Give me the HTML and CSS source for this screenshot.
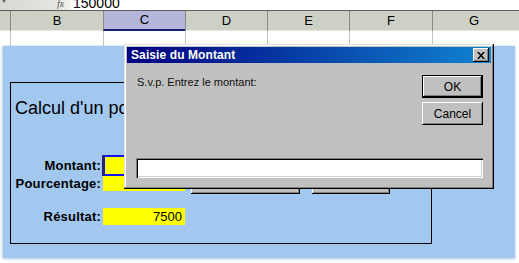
FILE: index.html
```html
<!DOCTYPE html>
<html lang="fr">
<head>
    <meta charset="UTF-8" />
    <meta name="viewport" content="width=device-width, initial-scale=1.0" />
    <link rel="stylesheet" href="styles.css">
</head>
<body>
    <div class="sheet">
        <div class="formula-bar">
            <div class="name-box"><span class="drop">&#9662;</span></div>
            <div class="fx">fx</div>
            <div class="formula">150000</div>
        </div>
        <div class="grid heads">
            <div class="corner"></div>
            <div class="head">B</div>
            <div class="head active">C</div>
            <div class="head">D</div>
            <div class="head">E</div>
            <div class="head">F</div>
            <div class="head">G</div>
        </div>
        <div class="grid cells">
            <div class="corner"></div>
            <div class="cell"></div>
            <div class="cell"></div>
            <div class="cell"></div>
            <div class="cell"></div>
            <div class="cell"></div>
            <div class="cell"></div>
        </div>
    </div>

    <!-- formulaire pose sur la feuille -->
    <div class="panel">
        <div class="frame">
            <h1 class="title">Calcul d'un pourcentage</h1>
            <div class="calc">
                <div class="fields">
                    <div class="lbl">Montant:</div>
                    <div class="box selected"></div>
                    <div class="lbl">Pourcentage:</div>
                    <div class="box"></div>
                    <div class="lbl result">Résultat:</div>
                    <div class="box result">7500</div>
                </div>
                <div class="actions">
                    <button class="sheet-btn wide">Calculer</button>
                    <button class="sheet-btn">Effacer</button>
                </div>
            </div>
        </div>
    </div>

    <!-- boite InputBox -->
    <div class="dialog">
        <div class="titlebar">
            <span class="caption">Saisie du Montant</span>
            <button class="close">
                <svg width="8" height="7" viewBox="0 0 8 7">
                    <path d="M0 0h2l2 2.5L6 0h2L5 3.5 8 7H6L4 4.5 2 7H0l3-3.5z" fill="#000" />
                </svg>
            </button>
        </div>
        <div class="dlg-body">
            <div class="dlg-top">
                <p class="prompt">S.v.p. Entrez le montant:</p>
                <div class="dlg-buttons">
                    <button class="win-btn default">OK</button>
                    <button class="win-btn">Cancel</button>
                </div>
            </div>
            <input class="dlg-input" type="text" />
        </div>
    </div>
</body>
</html>
```

FILE: styles.css
```css
body {
    margin: 0;
    font-family: "Liberation Sans", Arial, sans-serif;
    background: #fff;
    width: 519px;
    height: 263px;
    overflow: hidden;
}

/* feuille excel */
.formula-bar {
    display: flex;
    height: 10px;
    border-bottom: 1px solid #5e5e5e;
    overflow: hidden;
}

.name-box {
    width: 57px;
    background: linear-gradient(to right, #d8d8d4, #e4e4e0);
    position: relative;
}

.drop {
    position: absolute;
    left: 2px;
    top: -3px;
    font-size: 8px;
    line-height: 8px;
    color: #555;
}

.fx {
    width: 14px;
    background: linear-gradient(to right, #e4e4e0, #f4f4f2);
    font-family: "Liberation Serif", serif;
    font-style: italic;
    font-size: 10px;
    line-height: 8px;
    color: #555;
}

.formula {
    flex: 1;
    padding-left: 2px;
    font-size: 14px;
    line-height: 10px;
    margin-top: -2px;
    color: #000;
}

.grid {
    display: grid;
    grid-template-columns: 10px 93px 82px 82px 82px 83px 83px;
}

.heads {
    height: 19px;
    background: #cdd0c5;
    border-bottom: 1px solid #e8e8e0;
}

.head {
    border-left: 1px solid #8a8c84;
    text-align: center;
    font-size: 13px;
    line-height: 19px;
    color: #000;
}

.head.active {
    background: #b3b5da;
    border-bottom: 2px solid #14206e;
    line-height: 18px;
}

.cells {
    height: 16px;
}

.cell {
    border-left: 1px solid #c4c4c4;
}

/* zone bleue */
.panel {
    position: absolute;
    left: 3px;
    top: 46px;
    width: 512px;
    height: 212px;
    box-sizing: border-box;
    padding: 36px 0 0 7px;
    background: #a3c8ef;
    box-shadow: 0 1px 3px rgba(140, 170, 210, 0.6), -1px 0 2px rgba(200, 220, 245, 0.8);
}

.frame {
    width: 422px;
    height: 162px;
    box-sizing: border-box;
    border: 1px solid #000;
}

.title {
    margin: 0;
    padding: 15px 0 0 4px;
    font-size: 18px;
    font-weight: normal;
    line-height: 21px;
    white-space: nowrap;
}

.calc {
    display: flex;
    margin-top: 36px;
}

.fields {
    display: grid;
    grid-template-columns: 90px 82px;
    grid-template-rows: 21px 15px 17px 17px;
    column-gap: 2px;
}

.lbl {
    font-size: 13px;
    font-weight: bold;
    text-align: right;
    align-self: center;
    white-space: nowrap;
    letter-spacing: 0.2px;
}

.lbl.result,
.box.result {
    grid-row: 4;
}

.box {
    background: #ffff00;
    font-size: 13px;
    text-align: right;
    padding-right: 3px;
    line-height: 17px;
    box-sizing: border-box;
}

.box.selected {
    border: 2px solid #1414f0;
    box-shadow: -1px 0 0 #4a2a10;
}

.actions {
    display: flex;
    gap: 12px;
    margin: 13px 0 0 6px;
}

.sheet-btn {
    height: 26px;
    background: #c0c0c0;
    border: 0;
    font-family: inherit;
    font-size: 11px;
    box-shadow: inset -1px -1px #000, inset 1px 1px #fff, inset -2px -2px #808080;
}

.sheet-btn.wide {
    width: 109px;
}

.sheet-btn:not(.wide) {
    width: 78px;
}

/* boite de dialogue */
.dialog {
    position: absolute;
    left: 124px;
    top: 44px;
    width: 370px;
    height: 145px;
    box-sizing: border-box;
    padding: 3px;
    display: flex;
    flex-direction: column;
    background: #c0c0c0;
    box-shadow: inset -1px -1px #000, inset 1px 1px #dfdfdf, inset -2px -2px #808080, inset 2px 2px #fff;
}

.titlebar {
    height: 16px;
    display: flex;
    align-items: center;
    justify-content: space-between;
    padding: 0 2px 0 4px;
    background: linear-gradient(to right, #000080, #1084d0);
}

.caption {
    color: #fff;
    font-size: 12px;
    font-weight: bold;
    letter-spacing: 0.1px;
}

.close {
    width: 16px;
    height: 14px;
    padding: 0;
    border: 0;
    display: flex;
    align-items: center;
    justify-content: center;
    background: #c0c0c0;
    box-shadow: inset -1px -1px #000, inset 1px 1px #fff, inset -2px -2px #808080;
}

.dlg-body {
    flex: 1;
    display: flex;
    flex-direction: column;
    padding: 12px 8px 8px 9px;
}

.dlg-top {
    display: flex;
    justify-content: space-between;
}

.prompt {
    margin: 1px 0 0 1px;
    font-size: 11px;
    line-height: 13px;
    color: #111;
}

.dlg-buttons {
    display: flex;
    flex-direction: column;
    gap: 4px;
}

.win-btn {
    width: 61px;
    height: 23px;
    padding: 0;
    border: 0;
    background: #c0c0c0;
    font-family: inherit;
    font-size: 12px;
    color: #000;
    box-shadow: inset -1px -1px #000, inset 1px 1px #fff, inset -2px -2px #808080;
}

.win-btn.default {
    box-shadow: inset 0 0 0 1px #000, inset -2px -2px #000, inset 2px 2px #fff, inset -3px -3px #808080;
}

.dlg-input {
    margin-top: auto;
    height: 20px;
    box-sizing: border-box;
    border: 0;
    background: #fff;
    box-shadow: inset 1px 1px #808080, inset 2px 2px #000, inset -1px -1px #fff, inset -2px -2px #d4d0c8;
}
```
